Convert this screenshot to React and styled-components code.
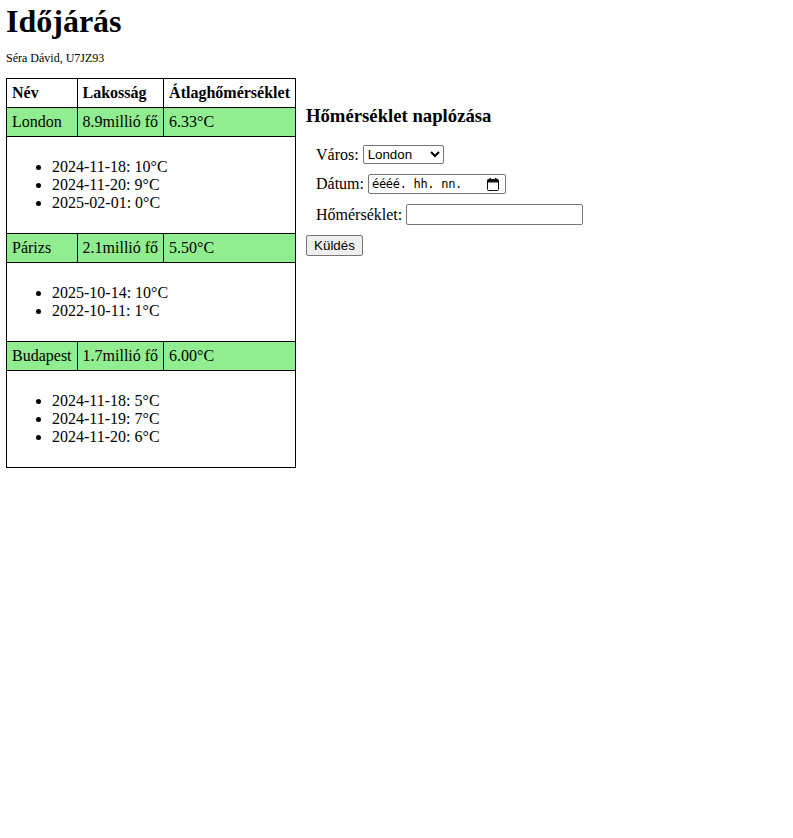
import React from 'react'
import styled, { createGlobalStyle } from 'styled-components'

const cities = [
    { name: 'London', population: '8.9millió fő', temps: [['2024-11-18', 10], ['2024-11-20', 9], ['2025-02-01', 0]] },
    { name: 'Párizs', population: '2.1millió fő', temps: [['2025-10-14', 10], ['2022-10-11', 1]] },
    { name: 'Budapest', population: '1.7millió fő', temps: [['2024-11-18', 5], ['2024-11-19', 7], ['2024-11-20', 6]] },
]

const average = (temps) => (temps.reduce((sum, t) => sum + t[1], 0) / temps.length).toFixed(2)

export default function App() {
    return (
        <>
            <GlobalStyle />
            <Page>
                <Title>Időjárás</Title>
                <Author>Séra Dávid, U7JZ93</Author>
                <Layout>
                    <Table>
                        <thead>
                            <tr>
                                <Th>Név</Th>
                                <Th>Lakosság</Th>
                                <Th>Átlaghőmérséklet</Th>
                            </tr>
                        </thead>
                        <tbody>
                            {cities.map((city) => (
                                <React.Fragment key={city.name}>
                                    <CityRow>
                                        <Td>{city.name}</Td>
                                        <Td>{city.population}</Td>
                                        <Td>{average(city.temps)}°C</Td>
                                    </CityRow>
                                    <tr>
                                        <Td colSpan={3}>
                                            <TempList>
                                                {city.temps.map(([date, value]) => (
                                                    <li key={date}>{date}: {value}°C</li>
                                                ))}
                                            </TempList>
                                        </Td>
                                    </tr>
                                </React.Fragment>
                            ))}
                        </tbody>
                    </Table>
                    <Panel>
                        <Heading>Hőmérséklet naplózása</Heading>
                        <Form onSubmit={(e) => e.preventDefault()}>
                            <Field>
                                Város:
                                <Select defaultValue="London">
                                    {cities.map((city) => (
                                        <option key={city.name}>{city.name}</option>
                                    ))}
                                </Select>
                            </Field>
                            <Field>
                                Dátum:
                                <DateBox>
                                    <span>éééé. hh. nn.</span>
                                    <svg width="12" height="13" viewBox="0 0 12 13">
                                        <rect x="0.5" y="1.5" width="11" height="11" rx="1" fill="none" stroke="#111" />
                                        <rect x="0.5" y="1.5" width="11" height="3" fill="#111" />
                                        <rect x="2.5" y="0" width="1.5" height="2.5" fill="#111" />
                                        <rect x="8" y="0" width="1.5" height="2.5" fill="#111" />
                                    </svg>
                                </DateBox>
                            </Field>
                            <Field>
                                Hőmérséklet:
                                <TextInput type="text" />
                            </Field>
                        </Form>
                        <SubmitButton type="submit">Küldés</SubmitButton>
                    </Panel>
                </Layout>
            </Page>
        </>
    )
}

const GlobalStyle = createGlobalStyle`
    body {
        margin: 0;
        background: #fff;
        color: #000;
        font-family: "Liberation Serif", "Times New Roman", serif;
    }
`

const Page = styled.div`
    padding: 0 6px;
`

const Title = styled.h1`
    margin: 0;
    padding-top: 3px;
    font-size: 32px;
    line-height: 37px;
`

const Author = styled.p`
    margin: 11px 0 13px;
    font-size: 12px;
    line-height: 14px;
`

const Layout = styled.div`
    display: flex;
    align-items: flex-start;
    gap: 10px;
`

const Table = styled.table`
    border-collapse: collapse;
    border: 1px solid #000;
    font-size: 16px;
`

const Th = styled.th`
    border: 1px solid #000;
    padding: 5px;
    text-align: left;
    line-height: 18px;
`

const Td = styled.td`
    border: 1px solid #000;
    padding: 5px;
    line-height: 18px;
`

const CityRow = styled.tr`
    background: #90ee90;
`

const TempList = styled.ul`
    margin: 16px 0;
    padding-left: 40px;
`

const Panel = styled.div`
    padding-top: 27px;
`

const Heading = styled.h3`
    margin: 0 0 18px;
    font-size: 18.72px;
    line-height: 22px;
`

const Form = styled.form`
    display: flex;
    flex-direction: column;
    gap: 10px;
    padding-left: 10px;
`

const Field = styled.label`
    display: flex;
    align-items: center;
    gap: 4px;
    font-size: 16px;
`

const Select = styled.select`
    box-sizing: border-box;
    width: 81px;
    height: 19px;
    font-family: "Liberation Sans", Arial, sans-serif;
    font-size: 13.33px;
    border: 1px solid #767676;
    border-radius: 2px;
    background: #fff;
`

const DateBox = styled.div`
    box-sizing: border-box;
    display: flex;
    align-items: center;
    justify-content: space-between;
    width: 138px;
    height: 20px;
    padding: 0 6px 0 3px;
    border: 1px solid #767676;
    border-radius: 2px;
    font-family: "DejaVu Sans Mono", "Liberation Mono", monospace;
    font-size: 12px;
    letter-spacing: -0.3px;
`

const TextInput = styled.input`
    box-sizing: border-box;
    width: 177px;
    height: 21px;
    border: 1px solid #767676;
    border-radius: 2px;
    padding: 1px 2px;
`

const SubmitButton = styled.button`
    box-sizing: border-box;
    margin-top: 10px;
    width: 57px;
    height: 21px;
    padding: 1px 6px;
    font-family: "Liberation Sans", Arial, sans-serif;
    font-size: 13.33px;
    background: #efefef;
    border: 1px solid #767676;
    border-radius: 2px;
    color: #000;
`
